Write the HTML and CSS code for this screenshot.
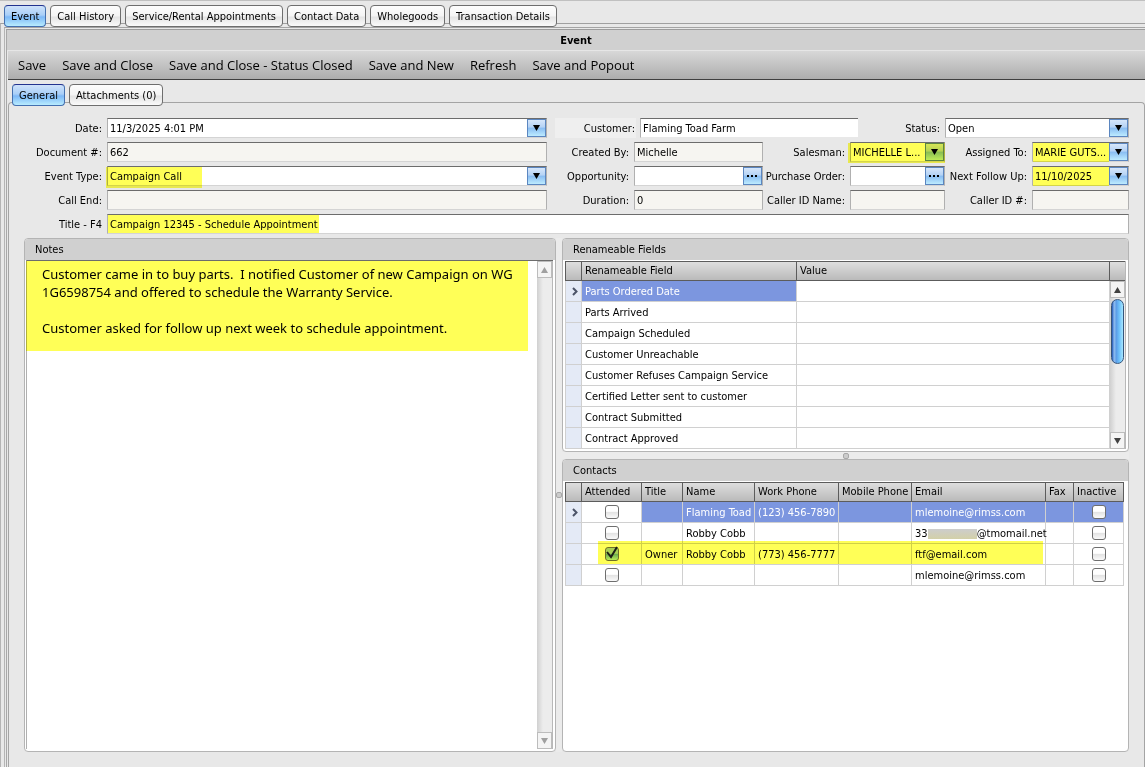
FILE: index.html
```html
<!DOCTYPE html>
<html lang="en">
<head>
    <meta charset="UTF-8">
    <meta name="viewport" content="width=device-width, initial-scale=1.0">
    <title>Event</title>
    <link rel="stylesheet" href="styles.css">
</head>
<body>
    <svg class="defs" width="0" height="0">
        <symbol id="down" viewBox="0 0 7 6"><path d="M0 0h7L3.5 6z"/></symbol>
        <symbol id="up" viewBox="0 0 7 6"><path d="M0 6h7L3.5 0z"/></symbol>
        <symbol id="dots" viewBox="0 0 11 2"><path d="M0 0h2v2H0zM4 0h2v2H4zM8 0h2v2H8z"/></symbol>
        <symbol id="row-arrow" viewBox="0 0 6 9"><path d="M1 1l3.5 3.5L1 8" fill="none" stroke="#4c5468" stroke-width="2"/></symbol>
    </svg>

    <nav class="tabs main-tabs">
        <button class="tab active">Event</button>
        <button class="tab">Call History</button>
        <button class="tab">Service/Rental Appointments</button>
        <button class="tab">Contact Data</button>
        <button class="tab">Wholegoods</button>
        <button class="tab">Transaction Details</button>
    </nav>

    <div class="frame">
        <div class="frame-inner">
            <main class="window">
                <h1 class="window-title">Event</h1>
                <div class="toolbar">
                    <button>Save</button>
                    <button>Save and Close</button>
                    <button>Save and Close - Status Closed</button>
                    <button>Save and New</button>
                    <button>Refresh</button>
                    <button>Save and Popout</button>
                </div>

                <nav class="tabs sub-tabs">
                    <button class="tab active">General</button>
                    <button class="tab">Attachments (0)</button>
                </nav>

                <div class="page">
                    <form class="form">
                        <label for="date">Date:</label>
                        <div class="field">
                            <input id="date" type="text" value="11/3/2025 4:01 PM">
                            <button type="button" class="drop" aria-label="Pick date"><svg width="7" height="6"><use href="#down"/></svg></button>
                        </div>
                        <div class="customer-row">
                            <label for="customer" class="customer-label">Customer:</label>
                            <div class="field customer-field"><input id="customer" type="text" value="Flaming Toad Farm"></div>
                            <label for="status" class="status-label">Status:</label>
                        </div>
                        <div class="field wide">
                            <select id="status"><option>Open</option></select>
                            <span class="drop"><svg width="7" height="6"><use href="#down"/></svg></span>
                        </div>

                        <label for="document">Document #:</label>
                        <div class="field readonly"><input id="document" type="text" value="662" readonly></div>
                        <label for="created-by">Created By:</label>
                        <div class="field readonly"><input id="created-by" type="text" value="Michelle" readonly></div>
                        <label for="salesman">Salesman:</label>
                        <div class="field mark mark-all">
                            <select id="salesman"><option>MICHELLE L...</option></select>
                            <span class="drop"><svg width="7" height="6"><use href="#down"/></svg></span>
                        </div>
                        <label for="assigned">Assigned To:</label>
                        <div class="field mark mark-value">
                            <select id="assigned"><option>MARIE GUTS...</option></select>
                            <span class="drop"><svg width="7" height="6"><use href="#down"/></svg></span>
                        </div>

                        <label for="event-type">Event Type:</label>
                        <div class="field mark mark-type">
                            <select id="event-type"><option>Campaign Call</option></select>
                            <span class="drop"><svg width="7" height="6"><use href="#down"/></svg></span>
                        </div>
                        <label for="opportunity">Opportunity:</label>
                        <div class="field">
                            <input id="opportunity" type="text">
                            <button type="button" class="drop" aria-label="Find opportunity"><svg width="11" height="2"><use href="#dots"/></svg></button>
                        </div>
                        <label for="purchase-order">Purchase Order:</label>
                        <div class="field">
                            <input id="purchase-order" type="text">
                            <button type="button" class="drop" aria-label="Find purchase order"><svg width="11" height="2"><use href="#dots"/></svg></button>
                        </div>
                        <label for="follow-up">Next Follow Up:</label>
                        <div class="field mark mark-value">
                            <input id="follow-up" type="text" value="11/10/2025">
                            <button type="button" class="drop" aria-label="Pick follow up date"><svg width="7" height="6"><use href="#down"/></svg></button>
                        </div>

                        <label for="call-end">Call End:</label>
                        <div class="field readonly"><input id="call-end" type="text" readonly></div>
                        <label for="duration">Duration:</label>
                        <div class="field readonly"><input id="duration" type="text" value="0" readonly></div>
                        <label for="caller-name">Caller ID Name:</label>
                        <div class="field readonly"><input id="caller-name" type="text" readonly></div>
                        <label for="caller-id">Caller ID #:</label>
                        <div class="field readonly"><input id="caller-id" type="text" readonly></div>

                        <label for="title">Title - F4</label>
                        <div class="field full mark mark-title"><input id="title" type="text" value="Campaign 12345 - Schedule Appointment"></div>
                    </form>

                    <div class="panels">
                        <section class="panel notes">
                            <h2><label for="notes">Notes</label></h2>
                            <div class="notes-body">
                                <textarea id="notes">Customer came in to buy parts.  I notified Customer of new Campaign on WG 1G6598754 and offered to schedule the Warranty Service.

Customer asked for follow up next week to schedule appointment.</textarea>
                                <div class="scrollbar disabled">
                                    <span class="scroll-btn"><svg width="7" height="6"><use href="#up"/></svg></span>
                                    <span class="scroll-track"></span>
                                    <span class="scroll-btn"><svg width="7" height="6"><use href="#down"/></svg></span>
                                </div>
                            </div>
                        </section>

                        <div class="splitter"></div>

                        <div class="side">
                            <section class="panel">
                                <h2>Renameable Fields</h2>
                                <div class="grid-box fields-box">
                                    <table class="grid">
                                        <colgroup><col class="c-mark"><col class="c-field"><col></colgroup>
                                        <thead><tr><th></th><th>Renameable Field</th><th>Value</th></tr></thead>
                                        <tbody>
                                            <tr><td class="head"><svg width="6" height="9"><use href="#row-arrow"/></svg></td><td class="selected">Parts Ordered Date</td><td></td></tr>
                                            <tr><td class="head"></td><td>Parts Arrived</td><td></td></tr>
                                            <tr><td class="head"></td><td>Campaign Scheduled</td><td></td></tr>
                                            <tr><td class="head"></td><td>Customer Unreachable</td><td></td></tr>
                                            <tr><td class="head"></td><td>Customer Refuses Campaign Service</td><td></td></tr>
                                            <tr><td class="head"></td><td>Certified Letter sent to customer</td><td></td></tr>
                                            <tr><td class="head"></td><td>Contract Submitted</td><td></td></tr>
                                            <tr><td class="head"></td><td>Contract Approved</td><td></td></tr>
                                        </tbody>
                                    </table>
                                    <div class="scrollbar">
                                        <span class="scroll-head"></span>
                                        <span class="scroll-btn"><svg width="7" height="6"><use href="#up"/></svg></span>
                                        <span class="scroll-track"><span class="scroll-thumb"></span></span>
                                        <span class="scroll-btn"><svg width="7" height="6"><use href="#down"/></svg></span>
                                    </div>
                                </div>
                            </section>

                            <div class="splitter-h"></div>

                            <section class="panel contacts">
                                <h2>Contacts</h2>
                                <div class="grid-box">
                                    <table class="grid">
                                        <colgroup>
                                            <col class="c-mark"><col class="c-attended"><col class="c-title"><col class="c-name"><col class="c-work">
                                            <col class="c-mobile"><col><col class="c-fax"><col class="c-inactive">
                                        </colgroup>
                                        <thead>
                                            <tr><th></th><th>Attended</th><th>Title</th><th>Name</th><th>Work Phone</th><th>Mobile Phone</th><th>Email</th><th>Fax</th><th>Inactive</th></tr>
                                        </thead>
                                        <tbody>
                                            <tr class="current">
                                                <td class="head"><svg width="6" height="9"><use href="#row-arrow"/></svg></td>
                                                <td class="check"><input type="checkbox" aria-label="Attended"></td>
                                                <td></td><td>Flaming Toad</td><td>(123) 456-7890</td><td></td><td>mlemoine@rimss.com</td><td></td>
                                                <td class="check"><input type="checkbox" aria-label="Inactive"></td>
                                            </tr>
                                            <tr>
                                                <td class="head"></td>
                                                <td class="check"><input type="checkbox" aria-label="Attended"></td>
                                                <td></td><td>Robby Cobb</td><td></td><td></td><td>33<span class="redacted"></span>@tmomail.net</td><td></td>
                                                <td class="check"><input type="checkbox" aria-label="Inactive"></td>
                                            </tr>
                                            <tr>
                                                <td class="head"></td>
                                                <td class="check"><span class="tick"><input type="checkbox" aria-label="Attended" checked><svg width="15" height="14" viewBox="0 0 15 14"><path d="M3 6l4 5L13 1" fill="none" stroke="#1d1d3c" stroke-width="2"/></svg></span></td>
                                                <td>Owner</td><td>Robby Cobb</td><td>(773) 456-7777</td><td></td><td>ftf@email.com</td><td></td>
                                                <td class="check"><input type="checkbox" aria-label="Inactive"></td>
                                            </tr>
                                            <tr>
                                                <td class="head"></td>
                                                <td class="check"><input type="checkbox" aria-label="Attended"></td>
                                                <td></td><td></td><td></td><td></td><td>mlemoine@rimss.com</td><td></td>
                                                <td class="check"><input type="checkbox" aria-label="Inactive"></td>
                                            </tr>
                                        </tbody>
                                    </table>
                                </div>
                            </section>
                        </div>
                    </div>
                </div>
            </main>
        </div>
    </div>
</body>
</html>
```
FILE: styles.css
```css
* {
    box-sizing: border-box;
}
body {
    margin: 0;
    min-height: 100vh;
    display: flex;
    flex-direction: column;
    background: #e8e8e8;
    border-top: 1px solid #c0c0c0;
    color: #000;
    font-family: Tahoma, "DejaVu Sans Condensed", "DejaVu Sans", sans-serif;
    font-size: 11px;
}
button, input, select, textarea {
    font: inherit;
    color: inherit;
    margin: 0;
}
.defs {
    position: absolute;
}

/* Tabs */
.tabs {
    display: flex;
    gap: 4px;
    position: relative;
    z-index: 1;
}
.main-tabs {
    padding: 4px 4px 0;
}
.sub-tabs {
    padding: 4px 5px 0;
}
.tab {
    height: 22px;
    padding: 0 6px;
    border: 1px solid #6e6e6e;
    border-radius: 4px;
    background: linear-gradient(#fdfdfd, #f4f4f4 50%, #e4e4e4 55%, #fafafa);
    white-space: nowrap;
}
.tab.active {
    border-color: #23338f #4470b0 #4470b0;
    background: linear-gradient(#cfe2fa, #a9cff8 45%, #7db8f7 55%, #b8ecff);
}

/* Window frames */
.frame {
    flex: 1;
    display: flex;
    margin-top: -4px;
    padding: 3px 0 0 3px;
    border-top: 1px solid #a0a0a0;
    border-left: 1px solid #b4b4b4;
}
.frame-inner {
    flex: 1;
    display: flex;
    padding: 1px 0 0 1px;
    border-top: 1px solid #a4a4a4;
    border-left: 1px solid #b4b4b4;
}
.window {
    flex: 1;
    min-width: 0;
    display: flex;
    flex-direction: column;
    border-top: 1px solid #9c9c9c;
    border-left: 1px solid #a8a8a8;
}
.window-title {
    margin: 0;
    height: 21px;
    border-bottom: 1px solid #e6e6e6;
    background: #d0d0d0;
    font-size: 11px;
    line-height: 22px;
    text-align: center;
}
.toolbar {
    display: flex;
    gap: 16px;
    height: 29px;
    padding: 0 10px;
    margin-left: 1px;
    border-bottom: 1px solid #404040;
    background: linear-gradient(#d8d8d8, #aeaeae);
}
.toolbar button {
    padding: 0;
    border: 0;
    background: none;
    font-family: "Open Sans", "Noto Sans", sans-serif;
    font-size: 13px;
    white-space: nowrap;
}
.page {
    flex: 1;
    display: flex;
    flex-direction: column;
    margin: -4px 0 0 1px;
    padding: 15px 15px 15px;
    border: 1px solid #a4a4a4;
    border-bottom: 0;
    border-radius: 4px 4px 0 0;
}

/* Form */
.form {
    display: grid;
    grid-template-columns: 83px 1fr 87px 129px 87px 95px 87px 97px;
    grid-auto-rows: 20px;
    row-gap: 4px;
}
.form label {
    padding-right: 5px;
    line-height: 22px;
    text-align: right;
    white-space: nowrap;
}
.field {
    position: relative;
    display: flex;
    min-width: 0;
    border: 1px solid #b0b0b0;
    border-top-color: #6c6c6c;
    border-bottom-color: #d4d4d4;
    background: #fff;
}
.field.readonly {
    background: #f6f5f1;
}
.field.wide {
    grid-column: 7 / 9;
}
.field.full {
    grid-column: 2 / 9;
}
.field input, .field select {
    flex: 1;
    width: 100%;
    min-width: 0;
    padding: 0 2px;
    border: 0;
    border-radius: 0;
    background: transparent;
    appearance: none;
    outline: none;
}
.drop {
    flex: none;
    display: flex;
    align-items: center;
    justify-content: center;
    width: 19px;
    padding: 0;
    border: 1px solid #5b86c0;
    background: linear-gradient(#d6e6fa, #b4d2f5 45%, #88bcf2 50%, #bdebff);
    pointer-events: none;
}
.customer-row {
    grid-column: 3 / 7;
    display: flex;
}
.form .customer-label {
    width: 81px;
    margin: 0 4px 0 8px;
    padding-right: 1px;
    background: #efefef;
}
.customer-field {
    flex: 1;
    border-right: 0;
    border-bottom-color: #e8e8e8;
}
.status-label {
    width: 87px;
}

/* Highlighter strokes */
.mark::after, .notes-body::after, .contacts .grid-box::after {
    content: "";
    position: absolute;
    background: #ffff57;
    mix-blend-mode: multiply;
    pointer-events: none;
}
.mark-all::after {
    inset: 0 -1px -2px -3px;
}
.mark-value::after {
    inset: 0 19px -1px 0;
}
.mark-type::after {
    inset: 0 auto -3px -2px;
    width: 96px;
}
.mark-title::after {
    inset: 0 auto 0 0;
    width: 211px;
}

/* Panels */
.panels {
    flex: 1;
    display: flex;
    margin-top: 4px;
}
.panel {
    display: flex;
    flex-direction: column;
    border: 1px solid #b4b4b4;
    border-radius: 4px;
    background: #fff;
}
.panel h2 {
    margin: 0;
    height: 21px;
    padding-left: 10px;
    border-radius: 3px 3px 0 0;
    background: #d0d0d0;
    font-size: 11px;
    font-weight: normal;
    line-height: 22px;
}
.notes {
    flex: 531 1 0;
}
.notes-body {
    position: relative;
    flex: 1;
    display: flex;
    margin: 0 2px 2px 1px;
    border-top: 1px solid #6c6c6c;
    border-left: 1px solid #b0b0b0;
}
.notes-body::after {
    top: 0;
    left: -1px;
    width: 502px;
    height: 90px;
}
.notes-body textarea {
    flex: 1;
    min-width: 0;
    padding: 4px 15px;
    border: 0;
    outline: none;
    resize: none;
    overflow: hidden;
    background: #fff;
    font-family: "Noto Sans", sans-serif;
    font-size: 13px;
    line-height: 18px;
}
.side {
    flex: 568 1 0;
    min-width: 0;
    display: flex;
    flex-direction: column;
}
.contacts {
    flex: 1;
}
.splitter, .splitter-h {
    display: flex;
    align-items: center;
    justify-content: center;
    width: 6px;
    background: #ebebeb;
}
.splitter-h {
    width: auto;
    height: 7px;
}
.splitter::after, .splitter-h::after {
    content: "";
    width: 4px;
    height: 4px;
    border: 1px solid #a8a8a8;
    border-radius: 2px;
    background: #ccc;
}

/* Grids */
.grid-box {
    display: flex;
    align-items: flex-start;
    margin: 1px 2px 2px;
}
.fields-box {
    height: 188px;
    overflow: hidden;
}
.contacts .grid-box {
    position: relative;
    margin-right: 4px;
}
.contacts .grid-box::after {
    top: 59px;
    right: 81px;
    left: 33px;
    height: 23px;
}
.grid {
    flex: 1;
    width: 100%;
    table-layout: fixed;
    border-collapse: separate;
    border-spacing: 0;
}
.grid th {
    height: 20px;
    padding: 0 0 2px 3px;
    border: solid #5c5c5c;
    border-width: 1px 1px 1px 0;
    background: linear-gradient(#dedede, #bababa);
    font-weight: normal;
    text-align: left;
    white-space: nowrap;
}
.grid td {
    height: 21px;
    padding: 0 0 0 3px;
    border: solid #d0d0d0;
    border-width: 0 1px 1px 0;
    white-space: nowrap;
}
.grid td.head {
    padding: 0 0 0 3px;
    border-left: 1px solid #d0d0d0;
    background: #e4eaf6;
}
.grid th:first-child {
    border-left-width: 1px;
}
.grid td svg {
    display: block;
    margin: 0 auto;
}
.grid .selected, .current td:nth-child(n+3) {
    background: #7c96df;
    color: #fff;
}
.c-mark { width: 17px; }
.c-field { width: 215px; }
.c-attended { width: 60px; }
.c-title { width: 41px; }
.c-name { width: 72px; }
.c-work { width: 84px; }
.c-mobile { width: 73px; }
.c-fax { width: 28px; }
.c-inactive { width: 50px; }
.grid td.check {
    padding: 0;
    text-align: center;
}
.grid input {
    display: block;
    width: 14px;
    height: 14px;
    margin: 0 auto;
    border: 1px solid #6e6e6e;
    border-radius: 3px;
    background: linear-gradient(#fff 45%, #e2e2e2 50%, #fafafa);
    appearance: none;
}
.grid input:checked {
    background: linear-gradient(#a9cff8 45%, #6aa9ea 50%, #b8ecff);
}
.tick {
    position: relative;
    display: block;
}
.tick svg {
    position: absolute;
    inset: -1px 0 0;
}
.redacted {
    display: inline-block;
    width: 49px;
    height: 10px;
    background: linear-gradient(#cdcdcd, #d3d0a8);
    vertical-align: -2px;
}

/* Scroll bars */
.scrollbar {
    flex: none;
    align-self: stretch;
    display: flex;
    flex-direction: column;
    width: 16px;
    border-right: 1px solid #b8b8b8;
    background: linear-gradient(90deg, #d0d0d0, #ececec 40%, #ececec);
}
.scroll-head {
    height: 20px;
    border: solid #5c5c5c;
    border-width: 1px 0;
    background: linear-gradient(#dedede, #bababa);
}
.scroll-btn {
    display: flex;
    align-items: center;
    justify-content: center;
    height: 17px;
    border: 1px solid #bcbcbc;
    background: #f4f4f4;
    fill: #404040;
}
.disabled .scroll-btn {
    fill: #a0a0a0;
}
.scroll-track {
    flex: 1;
    padding: 1px;
}
.scroll-thumb {
    display: block;
    height: 65px;
    width: 13px;
    border: 1px solid #35557c;
    border-radius: 7px;
    background: linear-gradient(90deg, #2056b8, #8fbcee 20%, #5c9ee8 40%, #6cc0fa 65%, #a6e6ff);
}
```
